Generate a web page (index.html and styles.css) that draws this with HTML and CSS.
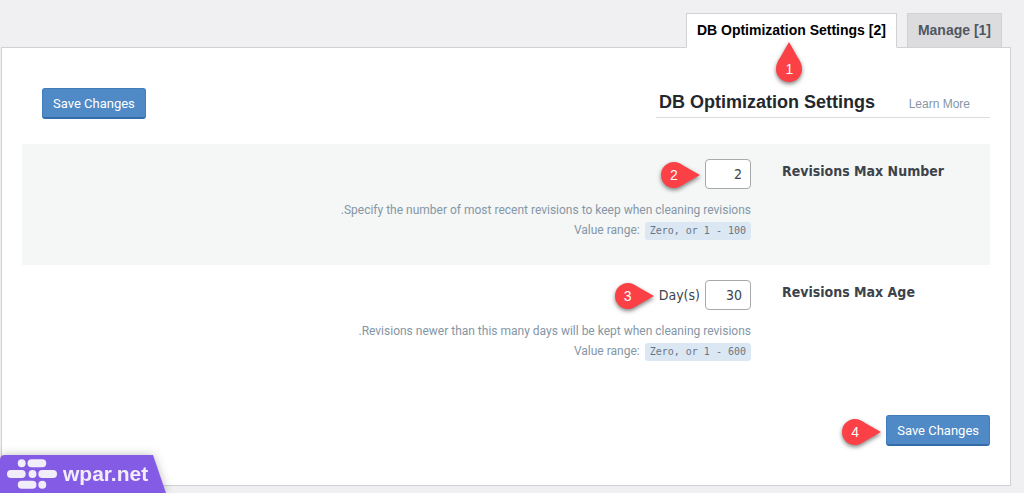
FILE: index.html
```html
<!DOCTYPE html>
<html lang="en">
<head>
<meta charset="utf-8">
<title>DB Optimization Settings</title>
<link rel="stylesheet" href="styles.css">
</head>
<body>
<svg class="defs" width="0" height="0" aria-hidden="true">
  <symbol id="drop" viewBox="0 0 40 26"><path d="M13 0C17 0 20 2 24 4.500L39 13L24 21.500C20 24 17 26 13 26A13 13 0 0 1 13 0Z"/></symbol>
</svg>
<nav class="tabs">
  <a class="tab tab-active" href="#settings">DB Optimization Settings [2]
    <span class="pin pin-up"><svg viewBox="0 0 26 40" aria-hidden="true"><path d="M13 0L21.500 15C24 19 26 22 26 27A13 13 0 0 1 0 27C0 22 2 19 4.500 15Z"/></svg><span class="pin-number">1</span></span>
  </a>
  <a class="tab" href="#manage">Manage [1]</a>
</nav>
<form class="panel" id="settings">
  <header class="panel-header">
    <button class="save" type="button">Save Changes</button>
    <div class="heading">
      <h1>DB Optimization Settings</h1>
      <a class="learn" href="#learn">Learn More</a>
    </div>
  </header>
  <section class="setting setting-shaded">
    <div class="field">
      <div class="control">
        <span class="anchor">
          <span class="pin"><svg aria-hidden="true"><use href="#drop"/></svg><span class="pin-number">2</span></span>
          <input id="max-number" class="number" type="text" inputmode="numeric" value="2">
        </span>
      </div>
      <p class="hint" dir="rtl">Specify the number of most recent revisions to keep when cleaning revisions.</p>
      <p class="hint">Value range: <code>Zero, or 1 - 100</code></p>
    </div>
    <label class="name" for="max-number">Revisions Max Number</label>
  </section>
  <section class="setting">
    <div class="field">
      <div class="control">
        <span class="anchor">
          <span class="pin"><svg aria-hidden="true"><use href="#drop"/></svg><span class="pin-number">3</span></span>
          <span class="unit">Day(s)</span>
          <input id="max-age" class="number" type="text" inputmode="numeric" value="30">
        </span>
      </div>
      <p class="hint" dir="rtl">Revisions newer than this many days will be kept when cleaning revisions.</p>
      <p class="hint">Value range: <code>Zero, or 1 - 600</code></p>
    </div>
    <label class="name" for="max-age">Revisions Max Age</label>
  </section>
  <footer class="panel-footer">
    <span class="anchor">
      <span class="pin"><svg aria-hidden="true"><use href="#drop"/></svg><span class="pin-number">4</span></span>
      <button class="save" type="submit">Save Changes</button>
    </span>
  </footer>
</form>
<div class="brand">
  <svg class="brand-shape" viewBox="0 0 166 38" preserveAspectRatio="none" aria-hidden="true"><path d="M5 0H153L166 38H0V5Q0 0 5 0Z"/></svg>
  <svg class="brand-logo" viewBox="0 0 52 30" aria-hidden="true">
    <circle cx="15" cy="4" r="4"/><rect x="21" y="0" width="19" height="8" rx="4"/>
    <rect x="0" y="11" width="19" height="8" rx="4"/><circle cx="26" cy="15" r="4"/><rect x="32" y="11" width="19" height="8" rx="4"/>
    <rect x="11" y="22" width="19" height="8" rx="4"/><circle cx="36" cy="26" r="4"/>
  </svg>
  <span class="brand-name">wpar.net</span>
</div>
</body>
</html>
```
FILE: styles.css
```css
* { box-sizing: border-box; }
body {
  margin: 0;
  padding: 13px 13px 8px 1px;
  background: #f0f0f2;
  color: #3c434a;
  font-family: "DejaVu Sans Condensed", "DejaVu Sans", sans-serif;
  font-size: 13px;
}
.defs { position: absolute; }
.tabs {
  display: flex;
  justify-content: flex-end;
  gap: 10px;
  padding-right: 9px;
}
.tab {
  position: relative;
  height: 35px;
  padding: 0 10px;
  border: 1px solid #d0d1d5;
  background: #dcdcde;
  color: #50575e;
  font: bold 14px/33px "Liberation Sans", Arial, sans-serif;
  text-decoration: none;
}
.tab-active {
  z-index: 1;
  border-bottom-color: #fff;
  background: #fff;
  color: #000;
}
.panel {
  margin-top: -1px;
  padding: 40px 20px 39px;
  border: 1px solid #d0d1d5;
  background: #fff;
}
.panel-header {
  display: flex;
  justify-content: space-between;
  align-items: flex-start;
  padding-left: 20px;
  margin-bottom: 25px;
}
.save {
  height: 31px;
  padding: 0 10px;
  border: 1px solid #3f7dbd;
  border-bottom: 2px solid #336da9;
  border-radius: 3px;
  background: #4f8ac7;
  color: #fff;
  font: 13px Roboto, sans-serif;
}
.heading {
  display: flex;
  align-items: baseline;
  justify-content: space-between;
  width: 334px;
  padding: 0 20px 0 3px;
  border-bottom: 1px solid #dcdcde;
}
h1 {
  margin: 0;
  color: #23282d;
  font: bold 18px/29px "Liberation Sans", Arial, sans-serif;
}
.learn {
  color: #8596a5;
  font: 12px "Liberation Sans", Arial, sans-serif;
  text-decoration: none;
}
.setting {
  display: flex;
  justify-content: flex-end;
  min-height: 121px;
  padding-top: 15px;
}
.setting-shaded { background: #f5f7f7; }
.field { flex: 1; }
.control {
  display: flex;
  justify-content: flex-end;
  margin-bottom: 11px;
}
.anchor {
  position: relative;
  display: flex;
  align-items: center;
  gap: 5px;
}
.number {
  width: 46px;
  height: 30px;
  padding: 0 8px;
  border: 1px solid #a7aaad;
  border-radius: 4px;
  background: #fff;
  color: #3c434a;
  font: 14px "DejaVu Sans Condensed", "DejaVu Sans", sans-serif;
  text-align: right;
}
.unit { font-size: 14px; }
.hint {
  margin: 0;
  color: #8596a5;
  font-family: Roboto, sans-serif;
  font-size: 12px;
  line-height: 20px;
  text-align: right;
}
.hint[dir="rtl"] { text-align: start; }
code {
  display: inline-block;
  margin-left: 2px;
  padding: 0 5px;
  border-radius: 3px;
  background: #dce7f4;
  color: #687684;
  font: 10px/18px "DejaVu Sans Mono", monospace;
}
.name {
  width: 239px;
  padding-left: 31px;
  font-weight: bold;
  font-size: 14px;
  line-height: 24px;
}
.panel-footer {
  display: flex;
  justify-content: flex-end;
  padding-top: 29px;
}
.pin {
  position: absolute;
  right: 100%;
  top: 50%;
  width: 40px;
  height: 26px;
  margin: -12px 4px 0 0;
  fill: #fb4146;
  color: #fff;
  font: 14px/26px "Liberation Sans", Arial, sans-serif;
  text-align: center;
}
.pin svg {
  position: absolute;
  inset: 0;
  width: 100%;
  height: 100%;
  overflow: visible;
  filter: drop-shadow(0 2px 2px rgba(0, 0, 0, .5));
}
.pin-number {
  position: absolute;
  left: 0;
  bottom: 0;
  width: 26px;
}
.pin-up {
  right: auto;
  left: 50%;
  top: 28px;
  width: 26px;
  height: 40px;
  margin: 0 0 0 -15px;
}
.brand {
  position: fixed;
  left: 0;
  bottom: 0;
  z-index: 2;
  display: flex;
  align-items: center;
  gap: 5px;
  width: 166px;
  height: 38px;
  padding-left: 7px;
  filter: drop-shadow(0 0 5px rgba(0, 0, 0, .25));
}
.brand-shape {
  position: absolute;
  inset: 0;
  width: 100%;
  height: 100%;
  fill: #845be5;
}
.brand-logo {
  position: relative;
  width: 51px;
  height: 30px;
  fill: #f2edfb;
}
.brand-name {
  position: relative;
  color: #f2edfb;
  font: bold 21px "Liberation Sans", Arial, sans-serif;
}
```
